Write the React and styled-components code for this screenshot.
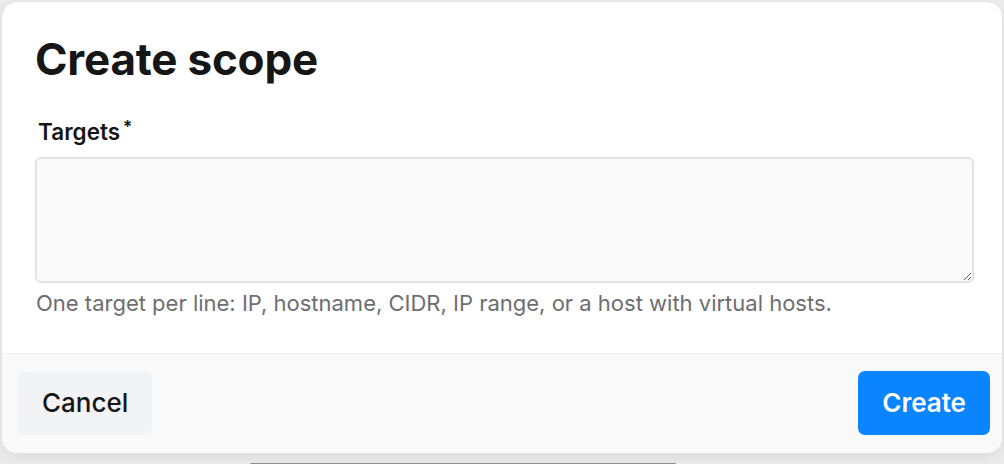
import React from "react";
import styled, { createGlobalStyle } from "styled-components";

const GlobalStyle = createGlobalStyle`
  html, body {
    margin: 0;
    padding: 0;
    background: #ececec;
    font-family: Inter, "Noto Sans", sans-serif;
    -webkit-font-smoothing: antialiased;
  }
`;

const Page = styled.div`
  padding: 1px 1px 0 1px;
  height: 463px;
  overflow: hidden;
`;

const Dialog = styled.div`
  width: 1000px;
  background: #fff;
  border: 1px solid #e3e3e3;
  border-radius: 16px;
  overflow: hidden;
  box-shadow: 0 4px 14px rgba(0, 0, 0, 0.07);
`;

const Body = styled.div`
  padding: 31px 29px 36px 33px;
`;

const Title = styled.h2`
  margin: 0 0 33px;
  font-size: 44px;
  line-height: 52px;
  font-weight: 700;
  color: #161616;
  letter-spacing: -0.2px;
`;

const Label = styled.label`
  display: block;
  margin: 0 0 11px 3px;
  font-size: 22.5px;
  line-height: 28px;
  font-weight: 600;
  color: #161616;

  sup {
    font-size: 17px;
    margin-left: 3px;
    vertical-align: 7px;
    line-height: 0;
  }
`;

const TextArea = styled.textarea`
  display: block;
  box-sizing: border-box;
  width: 939px;
  height: 126px;
  margin: 0;
  padding: 10px 12px;
  background: #fafafa;
  border: 2px solid #e2e2e2;
  border-radius: 6px;
  font-family: inherit;
  font-size: 20px;
  resize: vertical;
  outline: none;
`;

const Hint = styled.p`
  margin: 6px 0 0 1px;
  font-size: 22px;
  line-height: 28px;
  color: #6d6e70;
`;

const Footer = styled.div`
  display: flex;
  justify-content: space-between;
  align-items: center;
  height: 97px;
  padding: 0 12px 2px 16px;
  background: #f9f9f9;
  border-top: 1px solid #efefef;
`;

const Button = styled.button`
  height: 64px;
  padding: 0 24px;
  border: none;
  border-radius: 7px;
  font-family: inherit;
  font-size: 26px;
  font-weight: ${(p) => (p.$primary ? 600 : 500)};
  color: ${(p) => (p.$primary ? "#fff" : "#161616")};
  background: ${(p) => (p.$primary ? "#0a84ff" : "#f2f3f5")};
  cursor: pointer;
`;

const BehindBar = styled.div`
  width: 426px;
  height: 3px;
  margin: 9px 0 0 249px;
  background: #8e8e8e;
  border-radius: 1px;
`;

export default function App() {
  return (
    <Page>
      <GlobalStyle />
      <Dialog>
        <Body>
          <Title>Create scope</Title>
          <Label htmlFor="targets">
            Targets<sup>*</sup>
          </Label>
          <TextArea id="targets" />
          <Hint>
            One target per line: IP, hostname, CIDR, IP range, or a host with
            virtual hosts.
          </Hint>
        </Body>
        <Footer>
          <Button>Cancel</Button>
          <Button $primary>Create</Button>
        </Footer>
      </Dialog>
      <BehindBar />
    </Page>
  );
}
